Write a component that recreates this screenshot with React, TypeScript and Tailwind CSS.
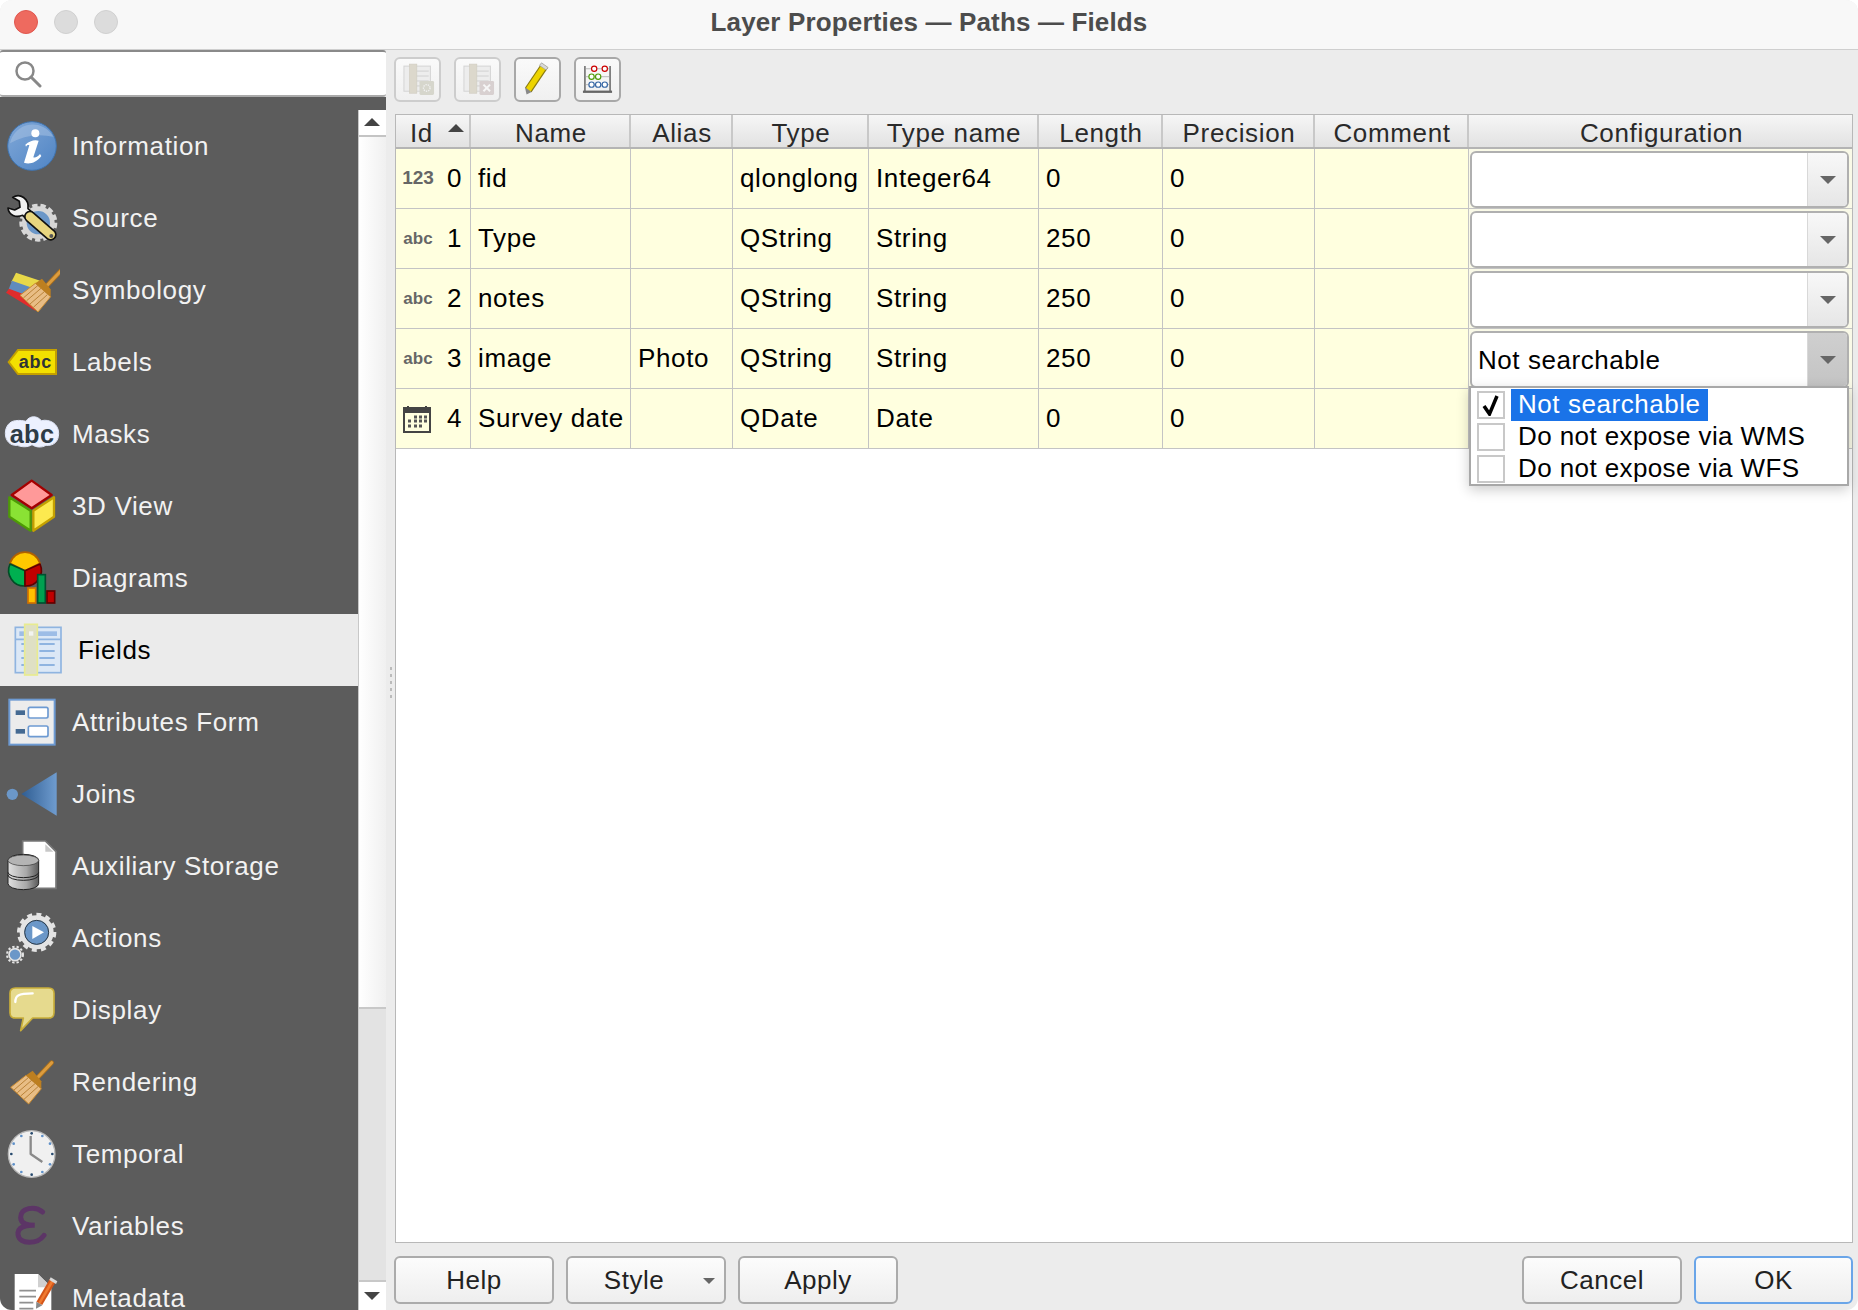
import type { ReactNode } from 'react';

const cols = 'grid grid-cols-[75px_160px_102px_136px_170px_124px_152px_154px_1fr]';
const btn = 'flex h-[48px] items-center justify-center rounded-[6px] border-2 border-[#ababab] bg-gradient-to-b from-[#fcfcfc] to-[#eeeeee] text-[26px] tracking-[0.5px] text-[#222]';

// icons are traced in 3x zoom coordinates, hence the 168 unit box around each row centre
function Ico({ cy, children }: { cy: number; children: ReactNode }) {
  return (
    <svg width="56" height="56" viewBox={`12 ${cy - 84} 168 168`} className="shrink-0">
      {children}
    </svg>
  );
}

const sw = 'font-["Liberation_Sans",sans-serif] font-bold';

function Brush({ dx = 0, dy = 0 }: { dx?: number; dy?: number }) {
  return (
    <g transform={`translate(${dx} ${dy})`}>
      <path d="M108 628 L155 578" stroke="#a86f1e" strokeWidth="14" strokeLinecap="round" />
      <path d="M108 628 L155 578" stroke="#dc9c3e" strokeWidth="9" strokeLinecap="round" />
      <path d="M32 652 L78 616 L124 656 L86 702 Z" fill="#e8bd85" stroke="#c98a30" strokeWidth="3" />
      <path d="M42 660 L86 622 M52 668 L96 630 M62 678 L106 640 M72 688 L114 650" stroke="#b98238" strokeWidth="3" />
      <path d="M78 616 L98 602 L124 634 L124 656 Z" fill="#bd7f20" />
    </g>
  );
}

const icons: ReactNode[] = [
  <Ico cy={438} key="info">
    <defs>
      <linearGradient id="infoG" x1="0" y1="0" x2="1" y2="1">
        <stop offset="0" stopColor="#80a8d8" />
        <stop offset="1" stopColor="#4f84c4" />
      </linearGradient>
    </defs>
    <circle cx="96" cy="438" r="73" fill="url(#infoG)" stroke="#3f74b0" strokeWidth="3" />
    <path d="M30 430 A70 70 0 0 1 160 410 Q90 395 30 430Z" fill="#a9c4e4" opacity="0.5" />
    <circle cx="106" cy="400" r="12" fill="#fff" />
    <path d="M76 434 C88 422 105 418 116 422 L100 472 C106 474 114 470 120 462 L124 468 C110 488 88 494 72 488 L88 436 C84 434 80 436 78 440 Z" fill="#fff" />
  </Ico>,
  <Ico cy={654} key="source">
    <circle cx="115" cy="668" r="52" fill="none" stroke="#d8d8d8" strokeWidth="10" strokeDasharray="16 9" />
    <circle cx="115" cy="668" r="42" fill="#6b97c8" stroke="#d6d6d6" strokeWidth="14" />
    <path d="M24 624 L44 630 L60 622 L58 604 L38 592 C60 578 88 596 84 626 L100 640 L84 662 L68 646 C48 654 26 646 24 624Z" fill="#f2f2f2" stroke="#111" strokeWidth="5" strokeLinejoin="round" />
    <path d="M90 650 L152 704" stroke="#111" strokeWidth="36" strokeLinecap="round" />
    <path d="M90 650 L152 704" stroke="#e8d67f" strokeWidth="26" strokeLinecap="round" />
    <circle cx="154" cy="708" r="6" fill="#555" />
  </Ico>,
  <Ico cy={870} key="symb">
    <path d="M48 818 L132 846 L122 880 L34 846 Z" fill="#e8d848" />
    <path d="M36 842 L122 872 L112 900 L26 868 Z" fill="#5f8bbd" />
    <path d="M27 866 L112 898 L106 932 L18 878 Z" fill="#e02c2c" />
    <Brush dx={28} dy={234} />
  </Ico>,
  <Ico cy={1086} key="labels">
    <path d="M26 1086 L54 1050 L168 1050 L168 1122 L54 1122 Z" fill="#f3e000" stroke="#c4a000" strokeWidth="6" />
    <text x="56" y="1105" fontSize="54" letterSpacing="2.5" className={sw} fill="#2e3436">abc</text>
  </Ico>,
  <Ico cy={1302} key="masks">
    <path d="M46 1262 C60 1260 70 1262 78 1264 C88 1246 112 1246 124 1262 C150 1256 176 1272 176 1300 C176 1326 160 1338 138 1336 C124 1344 108 1342 96 1334 C84 1342 66 1342 52 1336 C30 1338 16 1322 16 1300 C16 1280 28 1264 46 1262Z" fill="#edf1ff" stroke="#dfe5f6" strokeWidth="3" />
    <text x="29" y="1328" fontSize="76" letterSpacing="1" className={sw} fill="#2e3b46">abc</text>
  </Ico>,
  <Ico cy={198} key="3d">
    <path d="M95 122 L155 165 L95 205 L35 165 Z" fill="#f99" stroke="#a40000" strokeWidth="7" strokeLinejoin="round" />
    <path d="M28 172 L92 212 L92 272 L28 230 Z" fill="#8ae234" stroke="#4e9a06" strokeWidth="7" strokeLinejoin="round" />
    <path d="M100 212 L162 172 L162 230 L100 272 Z" fill="#fce94f" stroke="#c4a000" strokeWidth="7" strokeLinejoin="round" />
  </Ico>,
  <Ico cy={414} key="diag">
    <path d="M75 392 L30 370 A47 47 0 0 1 120 370 Z" fill="#ffc800" stroke="#b06000" strokeWidth="5" strokeLinejoin="round" />
    <path d="M75 392 L75 438 A47 47 0 0 1 30 372 Z" fill="#00b050" stroke="#004d26" strokeWidth="5" strokeLinejoin="round" />
    <path d="M75 392 L120 372 A47 47 0 0 1 75 438 Z" fill="#c00000" stroke="#600000" strokeWidth="5" strokeLinejoin="round" />
    <rect x="84" y="444" width="23" height="45" fill="#ffc000" stroke="#d07000" strokeWidth="5" />
    <rect x="113" y="404" width="23" height="85" fill="#00a050" stroke="#005030" strokeWidth="5" />
    <rect x="141" y="453" width="23" height="36" fill="#c00000" stroke="#600000" strokeWidth="5" />
  </Ico>,
  <Ico cy={630} key="fields">
    <rect x="28" y="562" width="137" height="136" fill="#dce8f6" stroke="#8fb4e0" strokeWidth="5" />
    <path d="M28 598 H165" stroke="#8fb4e0" strokeWidth="5" />
    <rect x="40" y="574" width="113" height="14" fill="#9dbde6" />
    <path d="M100 612 H146 M100 633 H146 M100 654 H146 M100 675 H146 M46 612 H54 M46 633 H54 M46 654 H54 M46 675 H54" stroke="#8fb4e0" strokeWidth="6" />
    <rect x="56" y="553" width="38" height="152" fill="#dfe0c4" stroke="#e8eb90" strokeWidth="5" />
    <rect x="69" y="574" width="13" height="13" fill="#f2f4f0" />
  </Ico>,
  <Ico cy={846} key="form">
    <rect x="28" y="779" width="136" height="135" fill="#ececec" stroke="#6d9ad2" strokeWidth="6" />
    <rect x="47" y="811" width="28" height="14" fill="#456a92" />
    <rect x="47" y="867" width="28" height="14" fill="#456a92" />
    <rect x="85" y="802" width="59" height="32" rx="5" fill="#fff" stroke="#6d9ad2" strokeWidth="5" />
    <rect x="85" y="858" width="59" height="32" rx="5" fill="#fff" stroke="#6d9ad2" strokeWidth="5" />
  </Ico>,
  <Ico cy={1062} key="joins">
    <defs>
      <linearGradient id="joinG" x1="0" y1="0" x2="1" y2="0">
        <stop offset="0" stopColor="#2f5d92" />
        <stop offset="1" stopColor="#6f9ccf" />
      </linearGradient>
    </defs>
    <circle cx="37" cy="1063" r="17" fill="#6b97c8" />
    <path d="M64 1062 L170 997 L170 1127 Z" fill="url(#joinG)" />
  </Ico>,
  <Ico cy={93} key="aux">
    <defs>
      <linearGradient id="dbG" x1="0" y1="0" x2="1" y2="0">
        <stop offset="0" stopColor="#e0e0e0" />
        <stop offset="0.6" stopColor="#a8a8a8" />
        <stop offset="1" stopColor="#5a5a5a" />
      </linearGradient>
    </defs>
    <path d="M68 18 L136 18 L168 50 L168 160 L68 160 Z" fill="#fff" stroke="#777" strokeWidth="5" />
    <path d="M136 28 L160 50 L136 50 Z" fill="#c8c8c8" />
    <path d="M24 76 A46 18 0 0 1 116 76 L116 146 A46 18 0 0 1 24 146 Z" fill="url(#dbG)" stroke="#222" strokeWidth="3" />
    <ellipse cx="70" cy="76" rx="46" ry="16" fill="#b4b4b4" stroke="#333" strokeWidth="2" />
    <path d="M24 112 A46 16 0 0 0 116 112 M24 120 A46 16 0 0 0 116 120" fill="none" stroke="#222" strokeWidth="3" />
  </Ico>,
  <Ico cy={204} key="actions">
    <circle cx="110" cy="187" r="54" fill="none" stroke="#e4e4e4" strokeWidth="10" strokeDasharray="15 13" />
    <circle cx="110" cy="187" r="44" fill="#6b97c8" stroke="#e4e4e4" strokeWidth="14" />
    <circle cx="110" cy="187" r="36" fill="none" stroke="#2d3a46" strokeWidth="3" />
    <path d="M97 168 L132 187 L97 207 Z" fill="#fff" />
    <circle cx="45" cy="254" r="24" fill="none" stroke="#e4e4e4" strokeWidth="6" strokeDasharray="7 6" />
    <circle cx="45" cy="254" r="18" fill="#6b97c8" stroke="#e4e4e4" strokeWidth="5" />
  </Ico>,
  <Ico cy={420} key="display">
    <path d="M46 354 H146 Q162 354 162 370 V428 Q162 444 146 444 H98 L62 482 L70 444 H46 Q30 444 30 428 V370 Q30 354 46 354Z" fill="#e6da8e" stroke="#c9ae3a" strokeWidth="5" strokeLinejoin="round" />
    <path d="M46 396 C46 378 52 370 98 370" fill="none" stroke="#fff" strokeWidth="7" strokeLinecap="round" />
  </Ico>,
  <Ico cy={636} key="render">
    <Brush />
  </Ico>,
  <Ico cy={852} key="temporal">
    <circle cx="95" cy="852" r="70" fill="#f0f0f0" stroke="#b8b8b8" strokeWidth="4" />
    <g fill="#5f90c8">
      <circle cx="64" cy="798" r="4" /><circle cx="127" cy="798" r="4" /><circle cx="41" cy="821" r="4" /><circle cx="150" cy="821" r="4" />
      <circle cx="41" cy="883" r="4" /><circle cx="150" cy="883" r="4" /><circle cx="64" cy="906" r="4" /><circle cx="127" cy="906" r="4" />
    </g>
    <g fill="#274a6e">
      <circle cx="95" cy="790" r="4" /><circle cx="95" cy="914" r="4" /><circle cx="34" cy="852" r="4" /><circle cx="157" cy="852" r="4" />
    </g>
    <path d="M92 798 V852 L127 876" fill="none" stroke="#8a8a8a" strokeWidth="7" strokeLinejoin="round" />
  </Ico>,
  <Ico cy={1068} key="vars">
    <path d="M128 1026 C104 1006 62 1014 62 1042 C62 1058 78 1066 104 1066 C72 1064 52 1074 54 1094 C58 1124 112 1124 132 1096" fill="none" stroke="#5c3566" strokeWidth="15" strokeLinecap="round" />
  </Ico>,
  <Ico cy={1284} key="meta">
    <path d="M44 1212 H114 L154 1252 V1330 H44 Z" fill="#fff" />
    <path d="M114 1212 L154 1252 H114 Z" fill="#d0d0d0" />
    <path d="M58 1262 H108 M58 1280 H108 M58 1298 H100 M58 1316 H100" stroke="#909090" strokeWidth="5" />
    <path d="M158 1232 L118 1300" stroke="#d3561a" strokeWidth="20" />
    <path d="M158 1232 L118 1300" stroke="#f07a30" strokeWidth="8" />
    <path d="M152 1222 L172 1234 L168 1242 L148 1230Z" fill="#d8d8d8" />
    <path d="M109 1295 L127 1306 L108 1316Z" fill="#888" />
  </Ico>,
];

const nav = ['Information', 'Source', 'Symbology', 'Labels', 'Masks', '3D View', 'Diagrams', 'Fields', 'Attributes Form', 'Joins', 'Auxiliary Storage', 'Actions', 'Display', 'Rendering', 'Temporal', 'Variables', 'Metadata'];

const rows = [
  { kind: '123', id: 0, name: 'fid', alias: '', type: 'qlonglong', typeName: 'Integer64', len: '0', prec: '0', value: '' },
  { kind: 'abc', id: 1, name: 'Type', alias: '', type: 'QString', typeName: 'String', len: '250', prec: '0', value: '' },
  { kind: 'abc', id: 2, name: 'notes', alias: '', type: 'QString', typeName: 'String', len: '250', prec: '0', value: '' },
  { kind: 'abc', id: 3, name: 'image', alias: 'Photo', type: 'QString', typeName: 'String', len: '250', prec: '0', value: 'Not searchable' },
  { kind: 'date', id: 4, name: 'Survey date', alias: '', type: 'QDate', typeName: 'Date', len: '0', prec: '0', value: '' },
];

function Arrow({ up = false, small = false }: { up?: boolean; small?: boolean }) {
  const size = small ? 'border-x-[6px] border-t-[6px]' : 'border-x-[8px]';
  if (up) return <span className="block h-0 w-0 border-x-[8px] border-b-[8px] border-x-transparent border-b-[#444]" />;
  return <span className={`block h-0 w-0 ${size} ${small ? '' : 'border-t-[8px]'} border-x-transparent border-t-[#666]`} />;
}

function Calendar() {
  return (
    <svg width="28" height="28" viewBox="0 0 28 28" className="ml-[1px]">
      <path d="M1 3 H27 V27 H1 Z" fill="none" stroke="#444" strokeWidth="2" />
      <rect x="1" y="3" width="26" height="5" fill="#444" />
      <path d="M5 1 V4 M23 1 V4" stroke="#444" strokeWidth="2" />
      <path d="M11 12 h3 M16 12 h3 M21 12 h3 M5 16 h3 M11 16 h3 M16 16 h3 M21 16 h3 M5 21 h3 M11 21 h3 M16 21 h3" stroke="#555" strokeWidth="3" />
    </svg>
  );
}

function Combo({ value }: { value: string }) {
  const open = value !== '';
  return (
    <div className="relative h-[57px] w-[379px]">
      <div className="flex h-full overflow-hidden rounded-[6px] border-2 border-[#b0b0b0] bg-white">
        <div className="flex-1 pl-[6px] text-[26px] leading-[54px] tracking-[0.55px] text-black">{value}</div>
        <div className={`flex w-[40px] items-center justify-center border-l border-[#d8d8d8] bg-gradient-to-b ${open ? 'from-[#cfcfcf] to-[#c4c4c4]' : 'from-[#f8f8f8] to-[#e6e6e6]'}`}>
          <Arrow />
        </div>
      </div>
      {open && (
        <div className="absolute left-[-1px] top-[55px] z-10 h-[100px] w-[380px] border-2 border-[#a8a8a8] bg-white pl-[6px] pt-[1px] text-[26px] tracking-[0.4px] text-black shadow-[0_4px_12px_rgba(0,0,0,0.2)]">
          {['Not searchable', 'Do not expose via WMS', 'Do not expose via WFS'].map((o, i) => (
            <div key={o} className="flex h-[32px] items-center">
              <span className="flex h-[28px] w-[28px] items-center justify-center border-2 border-[#c8c8c8] bg-white">
                {i === 0 && (
                  <svg width="20" height="22" viewBox="0 0 20 22">
                    <path d="M3 12 L8.5 20 L16 2" fill="none" stroke="#000" strokeWidth="3.5" />
                  </svg>
                )}
              </span>
              <span className={`ml-[6px] h-[32px] px-[7px] leading-[31px] ${i === 0 ? 'bg-[#1a73e8] tracking-[0.55px] text-white' : ''}`}>{o}</span>
            </div>
          ))}
        </div>
      )}
    </div>
  );
}

function ToolBtn({ vx, faded, children }: { vx: number; faded?: boolean; children: ReactNode }) {
  return (
    <div className={`h-[45px] w-[47px] rounded-[6px] border-2 bg-gradient-to-b from-[#fafafa] to-[#f0f0f0] ${faded ? 'border-[#cdcdcd]' : 'border-[#a8a8a8]'}`}>
      <svg width="43" height="41" viewBox={`${vx + 6} 19 130 123`}>{children}</svg>
    </div>
  );
}

const tableGlyph = (x: number) => (
  <g>
    <rect x={x + 30} y="40" width="80" height="76" fill="#ededed" stroke="#d4d4d4" strokeWidth="3" />
    <path d={`M${x + 60} 55 H${x + 105} M${x + 60} 70 H${x + 105} M${x + 60} 85 H${x + 105} M${x + 60} 100 H${x + 105}`} stroke="#d0d0d0" strokeWidth="3" />
    <rect x={x + 47} y="34" width="22" height="88" fill="#dcd8cc" stroke="#d0ccc0" strokeWidth="2" />
  </g>
);

export default function App() {
  return (
    <div className="relative flex h-[1310px] w-[1858px] flex-col overflow-hidden rounded-[12px] bg-[#ececec] font-['Liberation_Sans',Arial,sans-serif]">
      <div className="relative flex h-[50px] shrink-0 items-center justify-center border-b border-[#cfcfcf] bg-[#f8f8f8] pb-[5px]">
        <div className="absolute left-[14px] top-[10px] flex gap-[16px]">
          <span className="h-[24px] w-[24px] rounded-full border border-[#e0574f] bg-[#ee6a5f]" />
          <span className="h-[24px] w-[24px] rounded-full border border-[#d0d0d0] bg-[#dcdcdc]" />
          <span className="h-[24px] w-[24px] rounded-full border border-[#d0d0d0] bg-[#dcdcdc]" />
        </div>
        <span className="text-[26px] font-bold tracking-[0.15px] text-[#4c4c4c]">Layer Properties — Paths — Fields</span>
      </div>

      <div className="flex min-h-0 flex-1">
        <div className="flex w-[386px] shrink-0 flex-col">
          <div className="flex h-[47px] shrink-0 items-center rounded-[3px] border-t-2 border-b-2 border-t-[#8a8a8a] border-b-[#aaaaaa] bg-white pl-[14px]">
            <svg width="28" height="28" viewBox="0 0 28 28">
              <circle cx="11" cy="11" r="8.5" fill="none" stroke="#888" strokeWidth="2.5" />
              <path d="M17 17 L26 26" stroke="#888" strokeWidth="3" strokeLinecap="round" />
            </svg>
          </div>
          <div className="flex min-h-0 flex-1 bg-[#5c5c5c] pt-[13px]">
            <div className="w-[358px] shrink-0 overflow-hidden">
              {nav.map((n, i) => {
                const sel = n === 'Fields';
                return (
                  <div key={n} className={`flex h-[72px] items-center gap-[12px] text-[26px] tracking-[0.65px] ${sel ? 'bg-[#ebebeb] pl-[10px] text-black' : 'pl-[4px] text-[#f2f2f2]'}`}>
                    {icons[i]}
                    <span>{n}</span>
                  </div>
                );
              })}
            </div>
            <div className="flex w-[28px] flex-col border-l border-[#c8c8c8] bg-white">
              <div className="flex h-[27px] items-center justify-center border-b-2 border-[#c4c4c4] bg-white pb-[2px] pr-[2px]">
                <Arrow up />
              </div>
              <div className="h-[870px] bg-gradient-to-r from-white to-[#f0f0f0]" />
              <div className="flex-1 border-y-2 border-[#c8c8c8] bg-[#e3e3e3]" />
              <div className="flex h-[28px] items-center justify-center pr-[2px]">
                <span className="block h-0 w-0 border-x-[8px] border-t-[8px] border-x-transparent border-t-[#444]" />
              </div>
            </div>
          </div>
        </div>

        <div className="flex w-[8px] shrink-0 flex-col items-center justify-center gap-[4px] pl-[2px] pt-[4px]">
          {[0, 1, 2, 3, 4].map((d) => (
            <span key={d} className="h-[3px] w-[2px] bg-[#bbbbbb]" />
          ))}
        </div>

        <div className="flex min-w-0 flex-1 flex-col pl-px pr-[5px] pt-[7px]">
          <div className="-ml-px flex h-[45px] shrink-0 gap-[13px]">
            <ToolBtn vx={13} faded>
              {tableGlyph(13)}
              <rect x="90" y="85" width="44" height="42" rx="4" fill="#d6d6cc" />
              <circle cx="112" cy="106" r="10" fill="none" stroke="#f2f2f2" strokeWidth="4" strokeDasharray="4 3" />
            </ToolBtn>
            <ToolBtn vx={193} faded>
              {tableGlyph(193)}
              <rect x="270" y="85" width="44" height="42" rx="4" fill="#d8d0d0" />
              <path d="M282 96 L302 116 M302 96 L282 116" stroke="#f6f6f6" strokeWidth="6" />
            </ToolBtn>
            <ToolBtn vx={373}>
              <path d="M466 38 L416 112" stroke="#8a7a10" strokeWidth="24" />
              <path d="M466 38 L416 112" stroke="#edd400" strokeWidth="17" />
              <path d="M456 30 L476 44 L470 52 L450 38Z" fill="#d8d8d8" stroke="#999" strokeWidth="2" />
              <path d="M406 104 L426 118 L411 126 Z" fill="#888" />
            </ToolBtn>
            <ToolBtn vx={553}>
              <path d="M586 40 V118 M662 40 V118" stroke="#555" strokeWidth="4" />
              <path d="M586 48 H662 M586 72 H662 M586 96 H662" stroke="#999" strokeWidth="2" />
              <rect x="580" y="114" width="88" height="7" fill="#666" />
              <g fill="#fff" strokeWidth="3.5">
                <circle cx="614" cy="48" r="8" stroke="#cc0000" /><circle cx="646" cy="48" r="8" stroke="#cc0000" />
                <circle cx="606" cy="72" r="8" stroke="#4e9a06" /><circle cx="626" cy="72" r="8" stroke="#4e9a06" />
                <circle cx="606" cy="96" r="8" stroke="#3465a4" /><circle cx="626" cy="96" r="8" stroke="#3465a4" /><circle cx="646" cy="96" r="8" stroke="#3465a4" />
              </g>
            </ToolBtn>
          </div>

          <div className="mt-[12px] flex min-h-0 flex-1 flex-col border border-[#b8b8b8] bg-white text-[26px] tracking-[0.65px] text-black">
            <div className={`${cols} h-[34px] shrink-0 overflow-hidden border-b-2 border-[#b4b4b4] bg-gradient-to-b from-[#f6f6f6] to-[#e2e2e2] leading-[27px] text-[#2a2a2a]`}>
              <div className="flex items-center justify-between border-r-2 border-[#c8c8c8] pl-[14px] pr-[5px] pt-[5px]">
                <span>Id</span>
                <span className="mb-[12px]"><Arrow up /></span>
              </div>
              {['Name', 'Alias', 'Type', 'Type name', 'Length', 'Precision', 'Comment', 'Configuration'].map((h) => (
                <div key={h} className="flex items-center justify-center border-r-2 border-[#c8c8c8] pl-[2px] pt-[5px] last:border-r-0">{h}</div>
              ))}
            </div>
            {rows.map((r) => {
              const cell = 'flex items-center overflow-visible border-r border-[#c4c4c4] pl-[7px] whitespace-nowrap';
              return (
                <div key={r.id} className={`${cols} h-[60px] shrink-0 border-b border-[#c4c4c4] bg-[#ffffdf]`}>
                  <div className="flex items-center justify-between border-r border-[#c4c4c4] pl-[6px] pr-[8px]">
                    {r.kind === 'date' ? (
                      <Calendar />
                    ) : (
                      <span className={`w-[32px] text-center font-bold tracking-normal text-[#666] ${r.kind === '123' ? 'text-[19px]' : 'text-[17px]'}`}>{r.kind}</span>
                    )}
                    <span>{r.id}</span>
                  </div>
                  <div className={cell}>{r.name}</div>
                  <div className={cell}>{r.alias}</div>
                  <div className={cell}>{r.type}</div>
                  <div className={cell}>{r.typeName}</div>
                  <div className={cell}>{r.len}</div>
                  <div className={cell}>{r.prec}</div>
                  <div className={cell} />
                  <div className="bg-[#fafae8] pl-[1px] pt-[2px]">
                    <Combo value={r.value} />
                  </div>
                </div>
              );
            })}
          </div>

          <div className="-ml-px flex h-[67px] shrink-0 items-start pt-[13px]">
            <div className="flex gap-[12px]">
              <div className={`${btn} w-[160px]`}>Help</div>
              <div className={`${btn} relative w-[160px] pr-[24px]`}>
                Style
                <span className="absolute right-[9px] top-[20px]"><Arrow small /></span>
              </div>
              <div className={`${btn} w-[160px]`}>Apply</div>
            </div>
            <div className="ml-auto flex gap-[12px]">
              <div className={`${btn} w-[160px]`}>Cancel</div>
              <div className={`${btn} w-[159px] !border-[#6aa5e8]`}>OK</div>
            </div>
          </div>
        </div>
      </div>
    </div>
  );
}
